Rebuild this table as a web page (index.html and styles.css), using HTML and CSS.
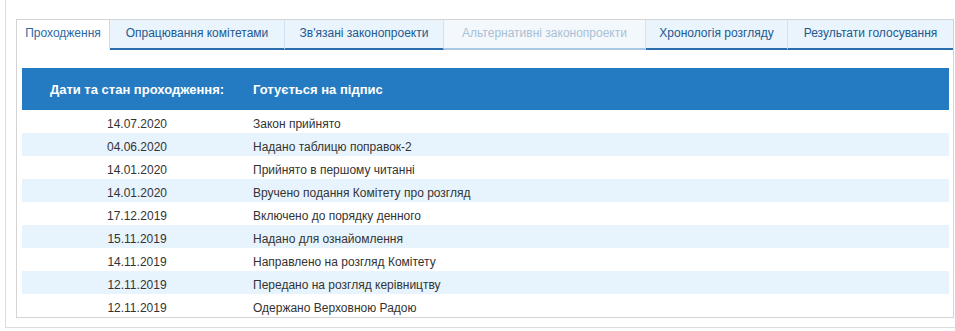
FILE: index.html
```html
<!DOCTYPE html>
<html lang="uk">
<head>
<meta charset="utf-8">
<title>Проходження</title>
<link rel="stylesheet" href="styles.css">
</head>
<body>
<div class="outer">
  <div class="panel">
    <ul class="tabs">
      <li class="tab active t1">Проходження</li>
      <li class="tab t2">Опрацювання комітетами</li>
      <li class="tab t3">Зв'язані законопроекти</li>
      <li class="tab disabled t4">Альтернативні законопроекти</li>
      <li class="tab t5">Хронологія розгляду</li>
      <li class="tab last">Результати голосування</li>
    </ul>
    <div class="content">
      <table class="stages">
        <thead>
          <tr>
            <th class="c-date">Дати та стан проходження:</th>
            <th class="c-text">Готується на підпис</th>
          </tr>
        </thead>
        <tbody>
          <tr><td class="c-date">14.07.2020</td><td class="c-text">Закон прийнято</td></tr>
          <tr><td class="c-date">04.06.2020</td><td class="c-text">Надано таблицю поправок-2</td></tr>
          <tr><td class="c-date">14.01.2020</td><td class="c-text">Прийнято в першому читанні</td></tr>
          <tr><td class="c-date">14.01.2020</td><td class="c-text">Вручено подання Комітету про розгляд</td></tr>
          <tr><td class="c-date">17.12.2019</td><td class="c-text">Включено до порядку денного</td></tr>
          <tr><td class="c-date">15.11.2019</td><td class="c-text">Надано для ознайомлення</td></tr>
          <tr><td class="c-date">14.11.2019</td><td class="c-text">Направлено на розгляд Комітету</td></tr>
          <tr><td class="c-date">12.11.2019</td><td class="c-text">Передано на розгляд керівництву</td></tr>
          <tr><td class="c-date">12.11.2019</td><td class="c-text">Одержано Верховною Радою</td></tr>
        </tbody>
      </table>
    </div>
  </div>
</div>
</body>
</html>
```

FILE: styles.css
```css
html, body {
  margin: 0;
  padding: 0;
  background: #fff;
  overflow: hidden;
}

body {
  font-family: "Liberation Sans", Arial, sans-serif;
  font-size: 12px;
  color: #333;
}

.outer {
  margin-left: 5px;
  width: 938px;
  padding: 19px 10px 9px 10px;
  border: 1px solid #dcdcdc;
  border-top: none;
}

.panel {
  border: 1px solid #d4d4d4;
}

.tabs {
  list-style: none;
  margin: 0;
  padding: 0;
  display: flex;
  height: 30px;
}

.tab {
  flex: none;
  height: 28px;
  line-height: 27px;
  padding: 0;
  text-align: center;
  font-size: 12px;
  color: #22598f;
  background: #e9f4fd;
  border-right: 1px solid #d3e3f1;
  border-bottom: 2px solid #2b6ead;
  white-space: nowrap;
}

.t1 { width: 92px; }
.t2 { width: 174px; }
.t3 { width: 158px; }
.t4 { width: 201px; }
.t5 { width: 141px; }

.tab.active {
  background: #fff;
  color: #2a69a6;
  border-bottom-color: transparent;
  border-right-color: #d8d8d8;
}

.tab.disabled {
  color: #aac0d4;
  background: #f3f8fd;
  border-bottom-color: #a9c7e2;
  border-right-color: #d3e3f1;
}

.tab.last {
  flex: 1;
  border-right: none;
}

.content {
  padding: 18px 4px 0 5px;
}

.stages {
  width: 100%;
  border-collapse: collapse;
}

.stages th {
  height: 42px;
  padding: 0;
  background: #247bc1;
  color: #fff;
  font-size: 13px;
  font-weight: bold;
  text-align: left;
}

.stages td {
  height: 18px;
  padding: 5px 0 0 0;
  line-height: 18px;
}

.stages tbody tr:nth-child(even) td {
  background: #e8f4fd;
}

.stages .c-date {
  width: 230px;
  text-align: center;
}

.stages .c-text {
  padding-left: 1px;
  text-align: left;
}
```
